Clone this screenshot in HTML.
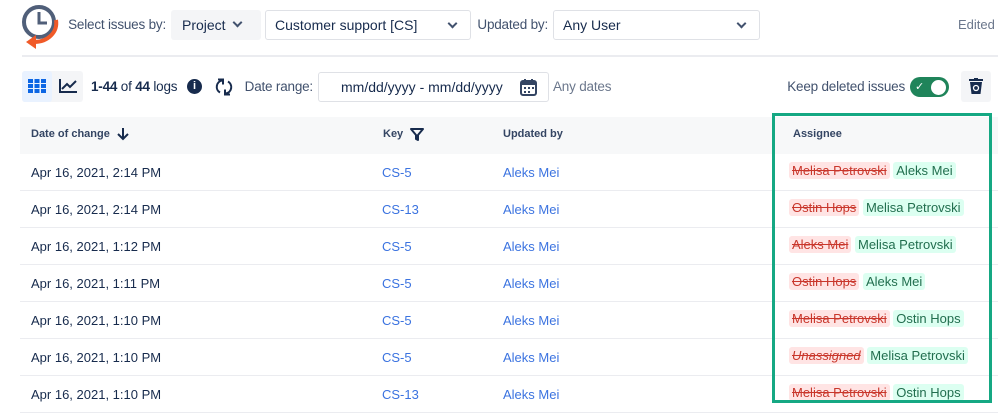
<!DOCTYPE html>
<html><head><style>
*{box-sizing:border-box;margin:0;padding:0}
body{width:998px;height:404px;overflow:hidden;background:#fff;font-family:"Liberation Sans",sans-serif;color:#172b4d;position:relative;font-size:13px}
.a{position:absolute;white-space:nowrap}
.sel{position:absolute;border:1px solid #dfe1e6;border-radius:3px;height:30px;top:10px;background:#fff;font-size:14px;line-height:28px;padding-left:9px}
.chev{position:absolute;right:14px;top:9px;width:7px;height:7px;border-right:2px solid #42526e;border-bottom:2px solid #42526e;transform:rotate(45deg)}
.row{position:absolute;left:20px;width:978px;height:37px;border-bottom:1px solid #ebecf0}
.row span{position:absolute;top:11px;font-size:13px;white-space:nowrap}
.k{color:#3b73e0}
.d{background:#ffe4e4;color:#c9372c;text-decoration:line-through;padding:1px 3px;border-radius:3px}
.n{background:#dcfff1;color:#216e4e;padding:1px 3px;border-radius:3px;font-size:14px}
.hdr{position:absolute;top:128px;font-size:11px;font-weight:bold;color:#344563}
.lbl{position:absolute;font-size:13.5px;color:#42526e;text-align:right;white-space:nowrap;letter-spacing:-0.2px}
</style></head><body>
<svg class="a" style="left:20px;top:3px" width="40" height="46" viewBox="0 0 40 46">
<circle cx="19" cy="19" r="15" fill="none" stroke="#505f79" stroke-width="4"/>
<path d="M19 9v11h8" fill="none" stroke="#505f79" stroke-width="3"/>
<path d="M36 17c2 12-8 22-22 22" fill="none" stroke="#f05a28" stroke-width="4"/>
<path d="M6 39l10-7v14z" fill="#f05a28"/>
</svg>
<div class="lbl" style="right:832px;top:17px">Select issues by:</div>
<div class="a" style="left:171px;top:10px;width:90px;height:30px;background:#f4f5f7;border-radius:3px;font-size:14px;line-height:30px;padding-left:11px">Project<div class="chev" style="right:20px"></div></div>
<div class="sel" style="left:265px;width:206px">Customer support [CS]<div class="chev"></div></div>
<div class="lbl" style="right:450px;top:17px">Updated by:</div>
<div class="sel" style="left:553px;width:207px">Any User<div class="chev"></div></div>
<div class="a" style="left:958px;top:17px;font-size:13px;color:#6b778c">Edited</div>
<div class="a" style="left:22px;top:55px;width:976px;height:2px;background:#ebecf0"></div>

<div class="a" style="left:22px;top:71px;width:61px;height:31px;background:#f4f5f7;border-radius:3px"></div>
<div class="a" style="left:22px;top:71px;width:30px;height:31px;background:#e9f2ff;border-radius:3px"></div>
<svg class="a" style="left:28px;top:79px" width="18" height="14"><g fill="#0c66e4"><rect x="0" y="0" width="5" height="4"/><rect x="6.5" y="0" width="5" height="4"/><rect x="13" y="0" width="5" height="4"/><rect x="0" y="5" width="5" height="4"/><rect x="6.5" y="5" width="5" height="4"/><rect x="13" y="5" width="5" height="4"/><rect x="0" y="10" width="5" height="4"/><rect x="6.5" y="10" width="5" height="4"/><rect x="13" y="10" width="5" height="4"/></g></svg>
<svg class="a" style="left:58px;top:78px" width="20" height="16"><path d="M2 1v13h17" fill="none" stroke="#172b4d" stroke-width="2"/><path d="M4 11l5-5 3 3 6-6" fill="none" stroke="#172b4d" stroke-width="2"/></svg>
<div class="a" style="left:91px;top:79px;font-size:13.5px;letter-spacing:-0.2px"><b>1-44</b> of <b>44</b> logs</div>
<div class="a" style="left:187px;top:79px;width:15px;height:15px;border-radius:50%;background:#172b4d;color:#fff;font-size:11px;font-weight:bold;text-align:center;line-height:15px">i</div>
<svg class="a" style="left:215px;top:78px" width="18" height="18" viewBox="0 0 18 18"><path d="M7 2.5A6.5 6.5 0 0 0 5 14.5" fill="none" stroke="#172b4d" stroke-width="2"/><path d="M3 1.5h5v5" fill="none" stroke="#172b4d" stroke-width="2"/><path d="M11 15.5A6.5 6.5 0 0 0 13 3.5" fill="none" stroke="#172b4d" stroke-width="2"/><path d="M15 16.5h-5v-5" fill="none" stroke="#172b4d" stroke-width="2"/></svg>
<div class="lbl" style="right:685px;top:79px">Date range:</div>
<div class="a" style="left:318px;top:72px;width:231px;height:30px;border:1px solid #dfe1e6;border-radius:3px;font-size:14px;line-height:28px;padding-left:22px">mm/dd/yyyy - mm/dd/yyyy</div>
<svg class="a" style="left:520px;top:78px" width="17" height="18"><rect x="1" y="3" width="15" height="14" rx="2" fill="none" stroke="#344563" stroke-width="2"/><rect x="1" y="3" width="15" height="4" fill="#344563"/><path d="M5 1v4M12 1v4" stroke="#344563" stroke-width="2"/><g fill="#344563"><rect x="4" y="9" width="2" height="2"/><rect x="8" y="9" width="2" height="2"/><rect x="12" y="9" width="2" height="2"/><rect x="4" y="13" width="2" height="2"/><rect x="8" y="13" width="2" height="2"/></g></svg>
<div class="lbl" style="left:553px;top:79px;color:#6b778c;text-align:left">Any dates</div>
<div class="lbl" style="right:93px;top:79px">Keep deleted issues</div>
<div class="a" style="left:910px;top:77px;width:39px;height:20px;border-radius:10px;background:#1f845a"></div>
<div class="a" style="left:915px;top:80px;color:#fff;font-size:11px">✓</div>
<div class="a" style="left:931px;top:80px;width:15px;height:15px;border-radius:50%;background:#fff"></div>
<div class="a" style="left:961px;top:71px;width:30px;height:31px;background:#f4f5f7;border-radius:3px"></div>
<svg class="a" style="left:968px;top:78px" width="16" height="17"><path d="M1 2h14" stroke="#172b4d" stroke-width="2"/><path d="M6 1h4" stroke="#172b4d" stroke-width="2"/><path d="M2 4h12l-1.5 12h-9z" fill="#172b4d"/><circle cx="8" cy="10" r="2.5" fill="none" stroke="#fff" stroke-width="1.3"/></svg>

<div class="a" style="left:20px;top:117px;width:978px;height:37px;background:#f7f8f9"></div>
<div class="hdr" style="left:31px">Date of change</div>
<svg class="a" style="left:117px;top:127px" width="12" height="14"><path d="M6 1v11M1 7l5 5 5-5" fill="none" stroke="#172b4d" stroke-width="2"/></svg>
<div class="hdr" style="left:383px">Key</div>
<svg class="a" style="left:410px;top:128px" width="14" height="13"><path d="M1 1h12l-5 6v5l-2-1v-4z" fill="none" stroke="#172b4d" stroke-width="2" stroke-linejoin="round"/></svg>
<div class="hdr" style="left:503px">Updated by</div>
<div class="hdr" style="left:793px">Assignee</div>

<div class="row" style="top:154px"><span style="left:11px">Apr 16, 2021, 2:14 PM</span><span class="k" style="left:362px">CS-5</span><span class="k" style="left:483px">Aleks Mei</span><span style="left:769px;top:9px"><span class="d" style="position:static">Melisa Petrovski</span> <span class="n" style="position:static">Aleks Mei</span></span></div>
<div class="row" style="top:191px"><span style="left:11px">Apr 16, 2021, 2:14 PM</span><span class="k" style="left:362px">CS-13</span><span class="k" style="left:483px">Aleks Mei</span><span style="left:769px;top:9px"><span class="d" style="position:static">Ostin Hops</span> <span class="n" style="position:static">Melisa Petrovski</span></span></div>
<div class="row" style="top:228px"><span style="left:11px">Apr 16, 2021, 1:12 PM</span><span class="k" style="left:362px">CS-5</span><span class="k" style="left:483px">Aleks Mei</span><span style="left:769px;top:9px"><span class="d" style="position:static">Aleks Mei</span> <span class="n" style="position:static">Melisa Petrovski</span></span></div>
<div class="row" style="top:265px"><span style="left:11px">Apr 16, 2021, 1:11 PM</span><span class="k" style="left:362px">CS-5</span><span class="k" style="left:483px">Aleks Mei</span><span style="left:769px;top:9px"><span class="d" style="position:static">Ostin Hops</span> <span class="n" style="position:static">Aleks Mei</span></span></div>
<div class="row" style="top:302px"><span style="left:11px">Apr 16, 2021, 1:10 PM</span><span class="k" style="left:362px">CS-5</span><span class="k" style="left:483px">Aleks Mei</span><span style="left:769px;top:9px"><span class="d" style="position:static">Melisa Petrovski</span> <span class="n" style="position:static">Ostin Hops</span></span></div>
<div class="row" style="top:339px"><span style="left:11px">Apr 16, 2021, 1:10 PM</span><span class="k" style="left:362px">CS-5</span><span class="k" style="left:483px">Aleks Mei</span><span style="left:769px;top:9px"><span class="d" style="position:static;font-style:italic">Unassigned</span> <span class="n" style="position:static">Melisa Petrovski</span></span></div>
<div class="row" style="top:376px"><span style="left:11px">Apr 16, 2021, 1:10 PM</span><span class="k" style="left:362px">CS-13</span><span class="k" style="left:483px">Aleks Mei</span><span style="left:769px;top:9px"><span class="d" style="position:static">Melisa Petrovski</span> <span class="n" style="position:static">Ostin Hops</span></span></div>

<div class="a" style="left:772px;top:113px;width:220px;height:290px;border:3px solid #15a883"></div>
</body></html>
